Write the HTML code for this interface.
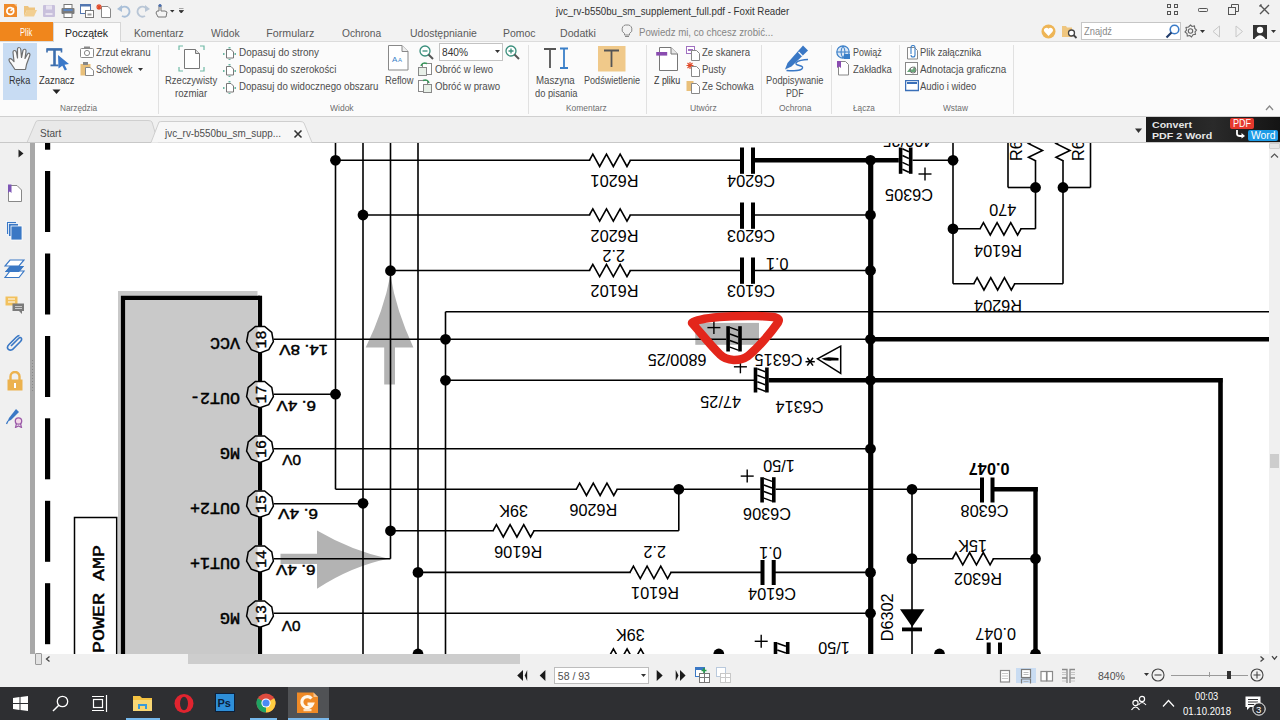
<!DOCTYPE html>
<html><head><meta charset="utf-8">
<style>
*{margin:0;padding:0;box-sizing:border-box}
html,body{width:1280px;height:720px;overflow:hidden;background:#f0f0f0;font-family:"Liberation Sans",sans-serif;color:#333}
.a{position:absolute;white-space:nowrap}
#title{left:0;top:0;width:1280px;height:22px;background:#f2f2f2}
#tabs{left:0;top:22px;width:1280px;height:20px;background:#f2f2f2}
#ribbon{left:0;top:41px;width:1280px;height:76px;background:#fbfbfb;border-top:1px solid #dcdcdc;border-bottom:1px solid #d0d0d0}
#doctabs{left:0;top:117px;width:1280px;height:26px;background:#f0f0f0;border-bottom:1px solid #c8c8c8}
#nav{left:0;top:143px;width:30px;height:521px;background:#f0f0f0}
#navbar{left:30px;top:143px;width:5px;height:521px;background:#a8a8a8}
#doc{left:35px;top:143px;width:1234px;height:511px;background:#fff}
#vscroll{left:1269px;top:143px;width:11px;height:521px;background:#f0f0f0}
#hscroll{left:30px;top:654px;width:1239px;height:10px;background:#f0f0f0}
#status{left:0;top:664px;width:1280px;height:23px;background:#f0f0f0}
#taskbar{left:0;top:687px;width:1280px;height:33px;background:#2e2f32}
.rt{font-size:11px;color:#444}
.gl{font-size:10px;color:#777}
.tab{font-size:11.5px;color:#555}
</style></head><body>
<div id="title" class="a"></div>
<div id="tabs" class="a"></div>
<div id="ribbon" class="a"></div>
<div id="doctabs" class="a"></div>
<div id="nav" class="a"></div>
<div id="navbar" class="a"></div>
<div id="doc" class="a"></div>
<div id="vscroll" class="a"></div>
<div id="hscroll" class="a"></div>
<div id="status" class="a"></div>
<div id="taskbar" class="a"></div>
<svg class="a" style="left:0;top:0" width="1280" height="720" viewBox="0 0 1280 720"><defs><clipPath id="dc"><rect x="35" y="143" width="1234" height="511"/></clipPath></defs><g clip-path="url(#dc)"><rect x="118" y="291" width="139.5" height="370" fill="#c9c9c9"/><path d="M390.4,275 Q384,310 365.7,347.5 L384.2,347.5 L384.2,384.5 L395,384.5 L395,347.5 L413.4,347.5 Q396,310 390.4,275 Z" fill="#b3b3b3"/><path d="M388.5,558.8 Q352,551 317,530.6 L317,553.8 L280.5,553.8 L280.5,564 L317,564 L317,588.8 Q352,566 388.5,558.8 Z" fill="#b3b3b3"/><rect x="695.3" y="322.9" width="63.7" height="21.9" fill="#b4b4b4"/><rect x="45" y="88.7" width="5.2" height="61"/><rect x="45" y="171" width="5.2" height="61"/><rect x="45" y="253.5" width="5.2" height="61"/><rect x="45" y="336" width="5.2" height="61"/><rect x="45" y="418.3" width="5.2" height="61"/><rect x="45" y="500.8" width="5.2" height="61"/><rect x="45" y="583.2" width="5.2" height="61"/><path d="M74.5,670 L74.5,517.5 L116.7,517.5 L116.7,670" fill="none" stroke="#000" stroke-width="1.5"/><text transform="translate(103.8,653) rotate(-90)" font-family="Liberation Mono" font-size="16" textLength="108" lengthAdjust="spacingAndGlyphs" stroke="#000" stroke-width="0.4">POWER AMP</text><path d="M123,670 L123,297.8 L260,297.8" fill="none" stroke="#000" stroke-width="4.2"/><path d="M260,295.7 L260,326.1" fill="none" stroke="#000" stroke-width="4.2"/><path d="M260,352.5 L260,381.0" fill="none" stroke="#000" stroke-width="4.2"/><path d="M260,407.4 L260,435.6" fill="none" stroke="#000" stroke-width="4.2"/><path d="M260,462.0 L260,490.5" fill="none" stroke="#000" stroke-width="4.2"/><path d="M260,516.9 L260,545.5" fill="none" stroke="#000" stroke-width="4.2"/><path d="M260,571.9000000000001 L260,600.5" fill="none" stroke="#000" stroke-width="4.2"/><path d="M260,626.9000000000001 L260,670" fill="none" stroke="#000" stroke-width="4.2"/><polygon points="273.39,341.66 268.74,349.72 260.00,352.90 251.26,349.72 246.61,341.66 248.22,332.50 255.35,326.52 264.65,326.52 271.78,332.50" fill="none" stroke="#000" stroke-width="1.5"/><text transform="translate(266.3,348.5) rotate(-90)" font-family="Liberation Mono" font-size="14" textLength="18" lengthAdjust="spacingAndGlyphs" stroke="#000" stroke-width="0.4">18</text><text transform="translate(239.9,338.1) rotate(180)" font-family="Liberation Mono" font-size="16" font-weight="normal" textLength="30" lengthAdjust="spacingAndGlyphs" stroke="#000" stroke-width="0.45">VCC</text><polygon points="273.39,396.56 268.74,404.62 260.00,407.80 251.26,404.62 246.61,396.56 248.22,387.40 255.35,381.42 264.65,381.42 271.78,387.40" fill="none" stroke="#000" stroke-width="1.5"/><text transform="translate(266.3,403.4) rotate(-90)" font-family="Liberation Mono" font-size="14" textLength="18" lengthAdjust="spacingAndGlyphs" stroke="#000" stroke-width="0.4">17</text><text transform="translate(239.9,393.0) rotate(180)" font-family="Liberation Mono" font-size="16" font-weight="normal" textLength="50" lengthAdjust="spacingAndGlyphs" stroke="#000" stroke-width="0.45">OUT2-</text><polygon points="273.39,451.16 268.74,459.22 260.00,462.40 251.26,459.22 246.61,451.16 248.22,442.00 255.35,436.02 264.65,436.02 271.78,442.00" fill="none" stroke="#000" stroke-width="1.5"/><text transform="translate(266.3,458.0) rotate(-90)" font-family="Liberation Mono" font-size="14" textLength="18" lengthAdjust="spacingAndGlyphs" stroke="#000" stroke-width="0.4">16</text><text transform="translate(239.9,447.6) rotate(180)" font-family="Liberation Mono" font-size="16" font-weight="normal" textLength="20" lengthAdjust="spacingAndGlyphs" stroke="#000" stroke-width="0.45">MG</text><polygon points="273.39,506.06 268.74,514.12 260.00,517.30 251.26,514.12 246.61,506.06 248.22,496.90 255.35,490.92 264.65,490.92 271.78,496.90" fill="none" stroke="#000" stroke-width="1.5"/><text transform="translate(266.3,512.9) rotate(-90)" font-family="Liberation Mono" font-size="14" textLength="18" lengthAdjust="spacingAndGlyphs" stroke="#000" stroke-width="0.4">15</text><text transform="translate(239.9,502.5) rotate(180)" font-family="Liberation Mono" font-size="16" font-weight="normal" textLength="50" lengthAdjust="spacingAndGlyphs" stroke="#000" stroke-width="0.45">OUT2+</text><polygon points="273.39,561.06 268.74,569.12 260.00,572.30 251.26,569.12 246.61,561.06 248.22,551.90 255.35,545.92 264.65,545.92 271.78,551.90" fill="none" stroke="#000" stroke-width="1.5"/><text transform="translate(266.3,567.9000000000001) rotate(-90)" font-family="Liberation Mono" font-size="14" textLength="18" lengthAdjust="spacingAndGlyphs" stroke="#000" stroke-width="0.4">14</text><text transform="translate(239.9,557.5) rotate(180)" font-family="Liberation Mono" font-size="16" font-weight="normal" textLength="50" lengthAdjust="spacingAndGlyphs" stroke="#000" stroke-width="0.45">OUT1+</text><polygon points="273.39,616.06 268.74,624.12 260.00,627.30 251.26,624.12 246.61,616.06 248.22,606.90 255.35,600.92 264.65,600.92 271.78,606.90" fill="none" stroke="#000" stroke-width="1.5"/><text transform="translate(266.3,622.9000000000001) rotate(-90)" font-family="Liberation Mono" font-size="14" textLength="18" lengthAdjust="spacingAndGlyphs" stroke="#000" stroke-width="0.4">13</text><text transform="translate(239.9,612.5) rotate(180)" font-family="Liberation Mono" font-size="16" font-weight="normal" textLength="20" lengthAdjust="spacingAndGlyphs" stroke="#000" stroke-width="0.45">MG</text><path d="M273.6,339.3 L726.3,339.3" fill="none" stroke="#000" stroke-width="1.6"/><path d="M273.6,394.2 L335.5,394.2" fill="none" stroke="#000" stroke-width="1.6"/><path d="M273.6,448.8 L870.5,448.8" fill="none" stroke="#000" stroke-width="1.6"/><path d="M273.6,503.7 L363,503.7" fill="none" stroke="#000" stroke-width="1.6"/><path d="M273.6,558.7 L390.5,558.7" fill="none" stroke="#000" stroke-width="1.6"/><path d="M273.6,613.3 L870.5,613.3" fill="none" stroke="#000" stroke-width="1.6"/><text transform="translate(328,345.2) rotate(180)" font-family="Liberation Sans" font-size="15" font-weight="normal" textLength="48.7" lengthAdjust="spacingAndGlyphs" stroke="#000" stroke-width="0.45">14. 8V</text><text transform="translate(316,400.6) rotate(180)" font-family="Liberation Sans" font-size="15" font-weight="normal" textLength="39.4" lengthAdjust="spacingAndGlyphs" stroke="#000" stroke-width="0.45">6. 4V</text><text transform="translate(301,455.2) rotate(180)" font-family="Liberation Sans" font-size="15" font-weight="normal" textLength="18.8" lengthAdjust="spacingAndGlyphs" stroke="#000" stroke-width="0.45">0V</text><text transform="translate(318,509) rotate(180)" font-family="Liberation Sans" font-size="15" font-weight="normal" textLength="40" lengthAdjust="spacingAndGlyphs" stroke="#000" stroke-width="0.45">6. 4V</text><text transform="translate(315.5,564.5) rotate(180)" font-family="Liberation Sans" font-size="15" font-weight="normal" textLength="39.4" lengthAdjust="spacingAndGlyphs" stroke="#000" stroke-width="0.45">6. 4V</text><text transform="translate(300.5,621.3) rotate(180)" font-family="Liberation Sans" font-size="15" font-weight="normal" textLength="18.8" lengthAdjust="spacingAndGlyphs" stroke="#000" stroke-width="0.45">0V</text><path d="M335.5,140 L335.5,489.3" fill="none" stroke="#000" stroke-width="1.6"/><path d="M335.5,489.3 L760.3,489.3" fill="none" stroke="#000" stroke-width="1.6"/><path d="M363,140 L363,660" fill="none" stroke="#000" stroke-width="1.6"/><path d="M390.5,140 L390.5,558.7" fill="none" stroke="#000" stroke-width="1.6"/><path d="M418,140 L418,660" fill="none" stroke="#000" stroke-width="1.6"/><path d="M445.5,311.7 L445.5,660" fill="none" stroke="#000" stroke-width="1.6"/><path d="M678.8,489.3 L678.8,530.8" fill="none" stroke="#000" stroke-width="1.6"/><path d="M390.5,530.8 L678.8,530.8" fill="none" stroke="#000" stroke-width="1.6"/><path d="M335.5,160.3 L742,160.3" fill="none" stroke="#000" stroke-width="1.6"/><path d="M363,215 L742,215" fill="none" stroke="#000" stroke-width="1.6"/><path d="M390.5,270.5 L742,270.5" fill="none" stroke="#000" stroke-width="1.6"/><path d="M753,160.3 L898.8,160.3" fill="none" stroke="#000" stroke-width="4.6"/><path d="M753,215 L870.5,215" fill="none" stroke="#000" stroke-width="1.6"/><path d="M753,270.5 L870.5,270.5" fill="none" stroke="#000" stroke-width="1.6"/><path d="M912.5,160.3 L953,160.3" fill="none" stroke="#000" stroke-width="1.6"/><path d="M870.7,160.3 L870.7,660" fill="none" stroke="#000" stroke-width="5.2"/><path d="M445.5,311.7 L1269,311.7" fill="none" stroke="#000" stroke-width="1.6"/><path d="M741,339.3 L870.5,339.3" fill="none" stroke="#000" stroke-width="1.6"/><path d="M870.5,339.3 L1269,339.3" fill="none" stroke="#000" stroke-width="4.6"/><path d="M445.5,380.3 L754,380.3" fill="none" stroke="#000" stroke-width="1.6"/><path d="M768.7,380.3 L1222.5,380.3" fill="none" stroke="#000" stroke-width="4.6"/><path d="M1220.5,378 L1220.5,660" fill="none" stroke="#000" stroke-width="4.6"/><path d="M418,572.4 L762.5,572.4" fill="none" stroke="#000" stroke-width="1.6"/><path d="M773.7,572.4 L870.5,572.4" fill="none" stroke="#000" stroke-width="1.6"/><path d="M775.6,489.3 L982,489.3" fill="none" stroke="#000" stroke-width="1.6"/><path d="M992.5,489.3 L1037.8,489.3" fill="none" stroke="#000" stroke-width="4.4"/><path d="M1035.5,487.1 L1035.5,660" fill="none" stroke="#000" stroke-width="4.4"/><path d="M912,489.3 L912,660" fill="none" stroke="#000" stroke-width="1.6"/><path d="M912,558.7 L1035.5,558.7" fill="none" stroke="#000" stroke-width="1.6"/><path d="M953,140 L953,283.8" fill="none" stroke="#000" stroke-width="1.6"/><path d="M953,228.8 L1035.5,228.8" fill="none" stroke="#000" stroke-width="1.6"/><path d="M953,283.8 L1063,283.8" fill="none" stroke="#000" stroke-width="1.6"/><path d="M1008,140 L1008,187.5" fill="none" stroke="#000" stroke-width="1.6"/><path d="M1008,187.5 L1035.5,187.5" fill="none" stroke="#000" stroke-width="1.6"/><path d="M1035.5,160 L1035.5,228.8" fill="none" stroke="#000" stroke-width="1.6"/><path d="M1090.5,140 L1090.5,187.5" fill="none" stroke="#000" stroke-width="1.6"/><path d="M1063,187.5 L1090.5,187.5" fill="none" stroke="#000" stroke-width="1.6"/><path d="M1063,160 L1063,283.8" fill="none" stroke="#000" stroke-width="1.6"/><path d="M1035.5,119.7 L1042.5,123.12 L1028.5,129.95 L1042.5,136.78 L1028.5,143.62 L1042.5,150.45 L1028.5,157.28 L1035.5,160.7" fill="none" stroke="#000" stroke-width="1.6"/><path d="M1063,119.7 L1070,123.12 L1056,129.95 L1070,136.78 L1056,143.62 L1070,150.45 L1056,157.28 L1063,160.7" fill="none" stroke="#000" stroke-width="1.6"/><rect x="590.1999999999999" y="158.8" width="39.4" height="3" fill="#fff"/><path d="M589.4,160.3 L592.82,154.1 L599.65,166.5 L606.48,154.1 L613.32,166.5 L620.15,154.1 L626.98,166.5 L630.4,160.3" fill="none" stroke="#000" stroke-width="1.6"/><rect x="590.1999999999999" y="213.5" width="39.4" height="3" fill="#fff"/><path d="M589.4,215 L592.82,208.8 L599.65,221.2 L606.48,208.8 L613.32,221.2 L620.15,208.8 L626.98,221.2 L630.4,215" fill="none" stroke="#000" stroke-width="1.6"/><rect x="590.1999999999999" y="269.0" width="39.4" height="3" fill="#fff"/><path d="M589.4,270.5 L592.82,264.3 L599.65,276.7 L606.48,264.3 L613.32,276.7 L620.15,264.3 L626.98,276.7 L630.4,270.5" fill="none" stroke="#000" stroke-width="1.6"/><rect x="980.8" y="227.3" width="39.4" height="3" fill="#fff"/><path d="M980,228.8 L983.42,222.6 L990.25,235.0 L997.08,222.6 L1003.92,235.0 L1010.75,222.6 L1017.58,235.0 L1021,228.8" fill="none" stroke="#000" stroke-width="1.6"/><rect x="974.5" y="282.3" width="39.4" height="3" fill="#fff"/><path d="M973.7,283.8 L977.12,277.6 L983.95,290.0 L990.78,277.6 L997.62,290.0 L1004.45,277.6 L1011.28,290.0 L1014.7,283.8" fill="none" stroke="#000" stroke-width="1.6"/><rect x="577.0" y="487.8" width="39.4" height="3" fill="#fff"/><path d="M576.2,489.3 L579.62,483.1 L586.45,495.5 L593.28,483.1 L600.12,495.5 L606.95,483.1 L613.78,495.5 L617.2,489.3" fill="none" stroke="#000" stroke-width="1.6"/><rect x="493.8" y="529.3" width="39.4" height="3" fill="#fff"/><path d="M493,530.8 L496.42,524.6 L503.25,537.0 L510.08,524.6 L516.92,537.0 L523.75,524.6 L530.58,537.0 L534,530.8" fill="none" stroke="#000" stroke-width="1.6"/><rect x="630.8" y="570.9" width="39.4" height="3" fill="#fff"/><path d="M630,572.4 L633.42,566.2 L640.25,578.6 L647.08,566.2 L653.92,578.6 L660.75,566.2 L667.58,578.6 L671,572.4" fill="none" stroke="#000" stroke-width="1.6"/><rect x="953.3" y="557.2" width="39.4" height="3" fill="#fff"/><path d="M952.5,558.7 L955.92,552.5 L962.75,564.9 L969.58,552.5 L976.42,564.9 L983.25,552.5 L990.08,564.9 L993.5,558.7" fill="none" stroke="#000" stroke-width="1.6"/><rect x="610.8" y="653.5" width="39.4" height="3" fill="#fff"/><path d="M610,655 L613.42,648.8 L620.25,661.2 L627.08,648.8 L633.92,661.2 L640.75,648.8 L647.58,661.2 L651,655" fill="none" stroke="#000" stroke-width="1.6"/><rect x="740.0" y="147.5" width="4" height="26.30000000000001"/><rect x="751.0" y="147.5" width="4" height="26.30000000000001"/><rect x="740.0" y="202.5" width="4" height="26.30000000000001"/><rect x="751.0" y="202.5" width="4" height="26.30000000000001"/><rect x="740.0" y="257.5" width="4" height="26.30000000000001"/><rect x="751.0" y="257.5" width="4" height="26.30000000000001"/><rect x="760.5" y="560" width="4" height="25"/><rect x="771.7" y="560" width="4" height="25"/><rect x="980.0" y="477.5" width="4" height="25.0"/><rect x="990.5" y="477.5" width="4" height="25.0"/><rect x="986.7" y="642.5" width="4" height="25.5"/><rect x="998.0" y="642.5" width="4" height="25.5"/><rect x="898.8" y="147.5" width="3.6" height="26.30000000000001"/><rect x="908.9" y="147.5" width="3.6" height="26.30000000000001"/><path d="M902.4,148.7 L908.9,151.7" fill="none" stroke="#000" stroke-width="1.5"/><path d="M902.4,155.54 L908.9,158.54" fill="none" stroke="#000" stroke-width="1.5"/><path d="M902.4,162.38 L908.9,165.38" fill="none" stroke="#000" stroke-width="1.5"/><path d="M902.4,169.21 L908.9,172.21" fill="none" stroke="#000" stroke-width="1.5"/><rect x="726.3" y="326.2" width="3.6" height="25.30000000000001"/><rect x="738.1999999999999" y="326.2" width="3.6" height="25.30000000000001"/><path d="M729.9,327.4 L738.1999999999999,330.4" fill="none" stroke="#000" stroke-width="1.5"/><path d="M729.9,333.98 L738.1999999999999,336.98" fill="none" stroke="#000" stroke-width="1.5"/><path d="M729.9,340.56 L738.1999999999999,343.56" fill="none" stroke="#000" stroke-width="1.5"/><path d="M729.9,347.13 L738.1999999999999,350.13" fill="none" stroke="#000" stroke-width="1.5"/><rect x="753.7" y="367.5" width="3.6" height="25.0"/><rect x="765.1" y="367.5" width="3.6" height="25.0"/><path d="M757.3000000000001,368.7 L765.1,371.7" fill="none" stroke="#000" stroke-width="1.5"/><path d="M757.3000000000001,375.2 L765.1,378.2" fill="none" stroke="#000" stroke-width="1.5"/><path d="M757.3000000000001,381.7 L765.1,384.7" fill="none" stroke="#000" stroke-width="1.5"/><path d="M757.3000000000001,388.2 L765.1,391.2" fill="none" stroke="#000" stroke-width="1.5"/><rect x="760.3" y="477.2" width="3.6" height="25.30000000000001"/><rect x="772.0" y="477.2" width="3.6" height="25.30000000000001"/><path d="M763.9,478.4 L772.0,481.4" fill="none" stroke="#000" stroke-width="1.5"/><path d="M763.9,484.98 L772.0,487.98" fill="none" stroke="#000" stroke-width="1.5"/><path d="M763.9,491.56 L772.0,494.56" fill="none" stroke="#000" stroke-width="1.5"/><path d="M763.9,498.13 L772.0,501.13" fill="none" stroke="#000" stroke-width="1.5"/><rect x="773.7" y="642" width="3.6" height="26"/><rect x="785.9" y="642" width="3.6" height="26"/><path d="M777.3000000000001,643.2 L785.9,646.2" fill="none" stroke="#000" stroke-width="1.5"/><path d="M777.3000000000001,649.96 L785.9,652.96" fill="none" stroke="#000" stroke-width="1.5"/><path d="M777.3000000000001,656.72 L785.9,659.72" fill="none" stroke="#000" stroke-width="1.5"/><path d="M777.3000000000001,663.48 L785.9,666.48" fill="none" stroke="#000" stroke-width="1.5"/><path d="M918.5,174 L931.5,174" fill="none" stroke="#000" stroke-width="1.4"/><path d="M925,167.5 L925,180.5" fill="none" stroke="#000" stroke-width="1.4"/><path d="M707.4,327.6 L720.4,327.6" fill="none" stroke="#000" stroke-width="1.4"/><path d="M713.9,321.1 L713.9,334.1" fill="none" stroke="#000" stroke-width="1.4"/><path d="M733.9,366.8 L746.9,366.8" fill="none" stroke="#000" stroke-width="1.4"/><path d="M740.4,360.3 L740.4,373.3" fill="none" stroke="#000" stroke-width="1.4"/><path d="M740.7,476.1 L753.7,476.1" fill="none" stroke="#000" stroke-width="1.4"/><path d="M747.2,469.6 L747.2,482.6" fill="none" stroke="#000" stroke-width="1.4"/><path d="M754.7,641.3 L767.7,641.3" fill="none" stroke="#000" stroke-width="1.4"/><path d="M761.2,634.8 L761.2,647.8" fill="none" stroke="#000" stroke-width="1.4"/><path d="M900,609.3 L924.5,609.3 L912.2,627 Z"/><rect x="902" y="627.5" width="20" height="3.8"/><path d="M840.7,346.2 L817.5,358.8 L840.7,373.4 Z" fill="none" stroke="#000" stroke-width="1.5"/><path d="M821.5,358.8 Q826,356.5 832,357.5 L838.5,358 L838.5,360.5 L832,360.5 Q826,361.5 821.5,358.8 Z"/><path d="M805.5,361.7 L814.8,361.7" fill="none" stroke="#000" stroke-width="1.5"/><path d="M807.3,357.8 L813,365.6" fill="none" stroke="#000" stroke-width="1.5"/><path d="M813,357.8 L807.3,365.6" fill="none" stroke="#000" stroke-width="1.5"/><circle cx="335.5" cy="160.3" r="5.4"/><circle cx="363" cy="215" r="5.4"/><circle cx="390.5" cy="270.7" r="5.4"/><circle cx="870.5" cy="160.3" r="5.4"/><circle cx="870.5" cy="215" r="5.4"/><circle cx="870.5" cy="270.5" r="5.4"/><circle cx="953" cy="160.3" r="5.4"/><circle cx="953" cy="228.8" r="5.4"/><circle cx="1035.5" cy="187.5" r="5.4"/><circle cx="1063" cy="187.5" r="5.4"/><circle cx="445.5" cy="339.3" r="5.4"/><circle cx="445.5" cy="380.3" r="5.4"/><circle cx="870.5" cy="339.3" r="5.4"/><circle cx="870.5" cy="380.3" r="5.4"/><circle cx="870.5" cy="448.8" r="5.4"/><circle cx="335.5" cy="394.2" r="5.4"/><circle cx="678.8" cy="489.3" r="5.4"/><circle cx="912" cy="489.3" r="5.4"/><circle cx="912" cy="558.7" r="5.4"/><circle cx="1035.5" cy="558.7" r="5.4"/><circle cx="363" cy="503.3" r="5.4"/><circle cx="390.5" cy="530.8" r="5.4"/><circle cx="418" cy="572.4" r="5.4"/><circle cx="870.5" cy="572.4" r="5.4"/><circle cx="870.5" cy="613.3" r="5.4"/><circle cx="418" cy="654" r="5.4"/><circle cx="718.8" cy="654" r="5.4"/><circle cx="939.5" cy="654" r="5.4"/><circle cx="1035.5" cy="654" r="5.4"/><text transform="translate(638.5,175) rotate(180)" font-family="Liberation Sans" font-size="16.3" font-weight="normal" >R6201</text><text transform="translate(638.5,230) rotate(180)" font-family="Liberation Sans" font-size="16.3" font-weight="normal" >R6202</text><text transform="translate(638.5,285) rotate(180)" font-family="Liberation Sans" font-size="16.3" font-weight="normal" >R6102</text><text transform="translate(775,175) rotate(180)" font-family="Liberation Sans" font-size="16.3" font-weight="normal" >C6204</text><text transform="translate(775,230) rotate(180)" font-family="Liberation Sans" font-size="16.3" font-weight="normal" >C6203</text><text transform="translate(775,285) rotate(180)" font-family="Liberation Sans" font-size="16.3" font-weight="normal" >C6103</text><text transform="translate(933,188.8) rotate(180)" font-family="Liberation Sans" font-size="16.3" font-weight="normal" >C6305</text><text transform="translate(1022,245) rotate(180)" font-family="Liberation Sans" font-size="16.3" font-weight="normal" >R6104</text><text transform="translate(1022,299.5) rotate(180)" font-family="Liberation Sans" font-size="16.3" font-weight="normal" >R6204</text><text transform="translate(802.5,353.5) rotate(180)" font-family="Liberation Sans" font-size="16.3" font-weight="normal" >C6315</text><text transform="translate(706.5,353.8) rotate(180)" font-family="Liberation Sans" font-size="16.3" font-weight="normal" >6800/25</text><text transform="translate(741,396.3) rotate(180)" font-family="Liberation Sans" font-size="16.3" font-weight="normal" >47/25</text><text transform="translate(823.5,401.3) rotate(180)" font-family="Liberation Sans" font-size="16.3" font-weight="normal" >C6314</text><text transform="translate(617.3,503.8) rotate(180)" font-family="Liberation Sans" font-size="16.3" font-weight="normal" >R6206</text><text transform="translate(542.2,546.3) rotate(180)" font-family="Liberation Sans" font-size="16.3" font-weight="normal" >R6106</text><text transform="translate(791,507.5) rotate(180)" font-family="Liberation Sans" font-size="16.3" font-weight="normal" >C6306</text><text transform="translate(1008.5,505) rotate(180)" font-family="Liberation Sans" font-size="16.3" font-weight="normal" >C6308</text><text transform="translate(1002,572.5) rotate(180)" font-family="Liberation Sans" font-size="16.3" font-weight="normal" >R6302</text><text transform="translate(679,587) rotate(180)" font-family="Liberation Sans" font-size="16.3" font-weight="normal" >R6101</text><text transform="translate(796,587.5) rotate(180)" font-family="Liberation Sans" font-size="16.3" font-weight="normal" >C6104</text><text transform="translate(528,505) rotate(180)" font-family="Liberation Sans" font-size="16.3" font-weight="normal" >39K</text><text transform="translate(625,250) rotate(180)" font-family="Liberation Sans" font-size="16.3" font-weight="normal" >2.2</text><text transform="translate(1016.3,203.8) rotate(180)" font-family="Liberation Sans" font-size="16.3" font-weight="normal" >470</text><text transform="translate(788.5,257.5) rotate(180)" font-family="Liberation Sans" font-size="16.3" font-weight="normal" >0.1</text><text transform="translate(794.8,460) rotate(180)" font-family="Liberation Sans" font-size="16.3" font-weight="normal" >1/50</text><text transform="translate(781.8,547) rotate(180)" font-family="Liberation Sans" font-size="16.3" font-weight="normal" >0.1</text><text transform="translate(987,539.5) rotate(180)" font-family="Liberation Sans" font-size="16.3" font-weight="normal" >15K</text><text transform="translate(666,545.6) rotate(180)" font-family="Liberation Sans" font-size="16.3" font-weight="normal" >2.2</text><text transform="translate(644.8,628.8) rotate(180)" font-family="Liberation Sans" font-size="16.3" font-weight="normal" >39K</text><text transform="translate(1016,628) rotate(180)" font-family="Liberation Sans" font-size="16.3" font-weight="normal" >0.047</text><text transform="translate(849.8,642) rotate(180)" font-family="Liberation Sans" font-size="16.3" font-weight="normal" >1/50</text><text transform="translate(932.3,135) rotate(180)" font-family="Liberation Sans" font-size="16.3" font-weight="normal" >400/25</text><text transform="translate(1009.5,462.5) rotate(180)" font-family="Liberation Sans" font-size="16.3" font-weight="bold" >0.047</text><text transform="translate(892.5,641.3) rotate(-90)" font-family="Liberation Sans" font-size="16.3" >D6302</text><text transform="translate(1022.3,161) rotate(-90)" font-family="Liberation Sans" font-size="16.3" >R6205</text><text transform="translate(1084.2,161) rotate(-90)" font-family="Liberation Sans" font-size="16.3" >R6206</text><path d="M692,323 C700,317 735,315.5 757,316 C770,316.5 782,316 778,322.5 C770,334 757,349 748,356 C740,361.5 727,361.5 720,354.5 C710,345 701,333 692,323 Z" fill="none" stroke="#e3261b" stroke-width="8.5" stroke-linejoin="round"/></g></svg>
<svg class="a" style="left:4px;top:4px" width="14" height="14" viewBox="0 0 14 14"><rect x="0" y="0" width="13" height="13" fill="#ef8b2c"/><path d="M13,0 L10,0 L13,3Z" fill="#f7c793"/><circle cx="6.3" cy="7" r="3.4" fill="none" stroke="#fff" stroke-width="1.8"/><path d="M6.5,6.8 L10,4" stroke="#fff" stroke-width="1.5"/></svg>
<svg class="a" style="left:24px;top:5px" width="13" height="12" viewBox="0 0 13 12"><path d="M0,1 L4,1 L5,2.5 L11,2.5 L11,5 L3,5 L0,11Z" fill="#eec47e"/><path d="M3,5 L13,5 L10,11.5 L0,11.5Z" fill="#f2cf92"/></svg>
<svg class="a" style="left:43px;top:5px" width="12" height="12" viewBox="0 0 12 12"><rect x="0" y="0" width="12" height="12" rx="1" fill="#c8c0dc"/><rect x="3" y="0.5" width="6" height="4" fill="#e8e3f0"/><rect x="2.5" y="8" width="7" height="2" fill="#e8e3f0"/></svg>
<svg class="a" style="left:61px;top:4px" width="14" height="14" viewBox="0 0 14 14"><rect x="3" y="0.5" width="8" height="4" fill="#fff" stroke="#777" stroke-width="1"/><rect x="0.5" y="4" width="13" height="6" rx="1" fill="#7b7b7b"/><rect x="2.5" y="5" width="9" height="2" fill="#5b86c2"/><rect x="3" y="9" width="8" height="4.5" fill="#fff" stroke="#777" stroke-width="1"/></svg>
<svg class="a" style="left:80px;top:4px" width="14" height="14" viewBox="0 0 14 14"><rect x="0.5" y="0.5" width="10" height="9" fill="#fff" stroke="#5276b0" stroke-width="1"/><rect x="0.5" y="0.5" width="10" height="2" fill="#5276b0"/><rect x="5.5" y="6.5" width="8" height="7" fill="#fff" stroke="#777" stroke-width="1"/><rect x="7.5" y="9.5" width="4" height="2" fill="#999"/></svg>
<svg class="a" style="left:96px;top:4px" width="15" height="14" viewBox="0 0 15 14"><path d="M5.5,2.5 L12,2.5 L14.5,5 L14.5,13.5 L5.5,13.5Z" fill="#fff" stroke="#888" stroke-width="1"/><path d="M3,0 L3,6 M0,3 L6,3 M1,1 L5,5 M5,1 L1,5" stroke="#e04a2a" stroke-width="1.2"/></svg>
<svg class="a" style="left:117px;top:4px" width="14" height="14" viewBox="0 0 14 14"><path d="M4,4 A5,5 0 1 1 5,12" fill="none" stroke="#a9bfd8" stroke-width="2"/><path d="M0,5 L5,1 L5,8Z" fill="#a9bfd8"/></svg>
<svg class="a" style="left:136px;top:4px" width="14" height="14" viewBox="0 0 14 14"><path d="M10,4 A5,5 0 1 0 9,12" fill="none" stroke="#b9c6d6" stroke-width="2"/><path d="M14,5 L9,1 L9,8Z" fill="#b9c6d6"/></svg>
<svg class="a" style="left:155px;top:4px" width="14" height="14" viewBox="0 0 14 14"><path d="M4,1 L4,7 L2,7 L1,9 L3,13 L11,13 L12,8 L10,7 L6,7 L6,1Z" fill="#f4f4f4" stroke="#777" stroke-width="1"/><circle cx="5" cy="1.5" r="1.5" fill="#4a6fb0"/></svg>
<svg class="a" style="left:170px;top:10px" width="5" height="3" viewBox="0 0 5 3"><path d="M0,0 L4.5,0 L2.25,2.5Z" fill="#333"/></svg>
<svg class="a" style="left:179px;top:8px" width="5" height="6" viewBox="0 0 5 6"><path d="M0,0 L4.5,0 M0,2.5 L4.5,2.5 L2.25,5Z" stroke="#333" fill="#333" stroke-width="0.8"/></svg>
<div class="a" style="left:556.24px;top:6.29px;font-size:10.5px;line-height:10.5px;color:#333;font-weight:normal;font-family:'Liberation Sans';transform:scaleX(0.925);transform-origin:0 0;">jvc_rv-b550bu_sm_supplement_full.pdf - Foxit Reader</div>
<svg class="a" style="left:1166px;top:3px" width="13" height="13" viewBox="0 0 13 13"><g fill="none" stroke="#555" stroke-width="1"><rect x="1.5" y="1.5" width="3" height="3"/><rect x="8.5" y="1.5" width="3" height="3"/><rect x="1.5" y="8.5" width="3" height="3"/><rect x="8.5" y="8.5" width="3" height="3"/></g></svg>
<svg class="a" style="left:1198px;top:7px" width="11" height="6" viewBox="0 0 11 6"><rect x="0.5" y="1.5" width="9" height="3" rx="0.8" fill="none" stroke="#555" stroke-width="1"/></svg>
<svg class="a" style="left:1228px;top:4px" width="12" height="12" viewBox="0 0 12 12"><g fill="none" stroke="#555" stroke-width="1"><rect x="0.5" y="3.5" width="7" height="7"/><path d="M3.5,3.5 L3.5,0.5 L10.5,0.5 L10.5,7.5 L7.5,7.5"/></g></svg>
<svg class="a" style="left:1259px;top:4px" width="12" height="12" viewBox="0 0 12 12"><path d="M1,1 L10,10 M10,1 L1,10" stroke="#555" stroke-width="1.4"/><path d="M1,1 L3,1 M1,1 L1,3" stroke="#555"/></svg>
<div class="a" style="left:0px;top:22px;width:53px;height:19px;background:#f0861c;"></div>
<div class="a" style="left:20.00px;top:27.23px;font-size:10.7px;line-height:10.7px;color:#fff;font-weight:normal;font-family:'Liberation Sans';transform:scaleX(0.706);transform-origin:0 0;">Plik</div>
<div class="a" style="left:53px;top:22px;width:68px;height:20px;background:#fbfbfb;border:1px solid #d6d6d6;border-bottom:none"></div>
<div class="a" style="left:64.80px;top:27.53px;font-size:10.7px;line-height:10.7px;color:#222;font-weight:normal;font-family:'Liberation Sans';transform:scaleX(0.980);transform-origin:0 0;">Początek</div>
<div class="a" style="left:134.20px;top:27.53px;font-size:10.7px;line-height:10.7px;color:#5a5a5a;font-weight:normal;font-family:'Liberation Sans';transform:scaleX(0.963);transform-origin:0 0;">Komentarz</div>
<div class="a" style="left:210.75px;top:27.53px;font-size:10.7px;line-height:10.7px;color:#5a5a5a;font-weight:normal;font-family:'Liberation Sans';transform:scaleX(0.965);transform-origin:0 0;">Widok</div>
<div class="a" style="left:266.25px;top:27.53px;font-size:10.7px;line-height:10.7px;color:#5a5a5a;font-weight:normal;font-family:'Liberation Sans';">Formularz</div>
<div class="a" style="left:342.00px;top:27.53px;font-size:10.7px;line-height:10.7px;color:#5a5a5a;font-weight:normal;font-family:'Liberation Sans';transform:scaleX(0.955);transform-origin:0 0;">Ochrona</div>
<div class="a" style="left:410.00px;top:27.53px;font-size:10.7px;line-height:10.7px;color:#5a5a5a;font-weight:normal;font-family:'Liberation Sans';transform:scaleX(0.979);transform-origin:0 0;">Udostępnianie</div>
<div class="a" style="left:502.50px;top:27.53px;font-size:10.7px;line-height:10.7px;color:#5a5a5a;font-weight:normal;font-family:'Liberation Sans';transform:scaleX(0.977);transform-origin:0 0;">Pomoc</div>
<div class="a" style="left:559.50px;top:27.53px;font-size:10.7px;line-height:10.7px;color:#5a5a5a;font-weight:normal;font-family:'Liberation Sans';transform:scaleX(0.992);transform-origin:0 0;">Dodatki</div>
<svg class="a" style="left:621px;top:24px" width="12" height="14" viewBox="0 0 12 14"><path d="M6,1 A4.5,4.5 0 0 1 8.5,9.5 L8.5,11 L3.5,11 L3.5,9.5 A4.5,4.5 0 0 1 6,1Z" fill="none" stroke="#888" stroke-width="1"/><path d="M4,12.5 L8,12.5" stroke="#888"/></svg>
<div class="a" style="left:638.70px;top:26.83px;font-size:10.7px;line-height:10.7px;color:#858585;font-weight:normal;font-family:'Liberation Sans';transform:scaleX(0.903);transform-origin:0 0;">Powiedz mi, co chcesz zrobić...</div>
<svg class="a" style="left:1041px;top:24px" width="16" height="16" viewBox="0 0 16 16"><circle cx="7.5" cy="7.5" r="7" fill="#eeb556"/><path d="M7.5,12 L3.5,7.8 A2.3,2.3 0 0 1 7.5,4.8 A2.3,2.3 0 0 1 11.5,7.8Z" fill="#fff"/></svg>
<svg class="a" style="left:1062px;top:24px" width="16" height="16" viewBox="0 0 16 16"><path d="M0,2 L4,2 L5,3.5 L10,3.5 L10,13 L0,13Z" fill="#efc67f"/><circle cx="9.5" cy="9" r="3" fill="#fff" stroke="#444" stroke-width="1.3"/><path d="M11.5,11 L14.5,14" stroke="#444" stroke-width="1.8"/></svg>
<div class="a" style="left:1081px;top:22px;width:100px;height:18px;background:#fff;border:1px solid #c6c6c6"></div>
<div class="a" style="left:1084.00px;top:25.99px;font-size:10.5px;line-height:10.5px;color:#8a8a8a;font-weight:normal;font-family:'Liberation Sans';transform:scaleX(0.889);transform-origin:0 0;">Znajdź</div>
<svg class="a" style="left:1165px;top:24px" width="16" height="15" viewBox="0 0 16 15"><circle cx="9.5" cy="5.5" r="4.3" fill="none" stroke="#3a7bc8" stroke-width="1.6"/><path d="M6.5,8.5 L1.5,13.5" stroke="#223c6b" stroke-width="2.2"/></svg>
<svg class="a" style="left:1184px;top:24px" width="15" height="15" viewBox="0 0 15 15"><g fill="none" stroke="#666" stroke-width="1.1"><circle cx="6.5" cy="7" r="2.2"/><path d="M6.5,1 L8,2.5 L10.5,2 L10.8,4.5 L12.5,6 L11,7.8 L11.5,10.3 L9,10.8 L7.5,13 L5.8,11.5 L3.3,12 L3,9.5 L1,8 L2.5,6 L2,3.5 L4.5,3 Z"/></g></svg>
<svg class="a" style="left:1200px;top:30px" width="6" height="4" viewBox="0 0 6 4"><path d="M0,0 L5,0 L2.5,3Z" fill="#333"/></svg>
<svg class="a" style="left:1212px;top:25px" width="9" height="13" viewBox="0 0 9 13"><path d="M7.5,1 L1,6.5 L7.5,12Z" fill="none" stroke="#c8c8c8" stroke-width="1"/></svg>
<svg class="a" style="left:1235px;top:25px" width="9" height="13" viewBox="0 0 9 13"><path d="M1,1 L7.5,6.5 L1,12Z" fill="none" stroke="#c8c8c8" stroke-width="1"/></svg>
<svg class="a" style="left:1253px;top:25px" width="14" height="14" viewBox="0 0 14 14"><rect x="0" y="0" width="14" height="14" fill="#333"/><circle cx="7" cy="5" r="3.2" fill="#fff"/><path d="M1.5,14 Q7,6.5 12.5,14Z" fill="#fff"/></svg>
<svg class="a" style="left:1271px;top:30px" width="6" height="4" viewBox="0 0 6 4"><path d="M0,0 L5,0 L2.5,3Z" fill="#333"/></svg>
<div class="a" style="left:158.3px;top:44.5px;width:1px;height:69px;background:#e1e1e1;"></div>
<div class="a" style="left:527.5px;top:44.5px;width:1px;height:69px;background:#e1e1e1;"></div>
<div class="a" style="left:646.3px;top:44.5px;width:1px;height:69px;background:#e1e1e1;"></div>
<div class="a" style="left:761.3px;top:44.5px;width:1px;height:69px;background:#e1e1e1;"></div>
<div class="a" style="left:830.5px;top:44.5px;width:1px;height:69px;background:#e1e1e1;"></div>
<div class="a" style="left:898.8px;top:44.5px;width:1px;height:69px;background:#e1e1e1;"></div>
<div class="a" style="left:1013.3px;top:44.5px;width:1px;height:69px;background:#e1e1e1;"></div>
<div class="a" style="left:59.70px;top:103.09px;font-size:9.4px;line-height:9.4px;color:#6e6e6e;font-weight:normal;font-family:'Liberation Sans';transform:scaleX(0.878);transform-origin:0 0;">Narzędzia</div>
<div class="a" style="left:330.00px;top:103.09px;font-size:9.4px;line-height:9.4px;color:#6e6e6e;font-weight:normal;font-family:'Liberation Sans';transform:scaleX(0.907);transform-origin:0 0;">Widok</div>
<div class="a" style="left:566.25px;top:103.09px;font-size:9.4px;line-height:9.4px;color:#6e6e6e;font-weight:normal;font-family:'Liberation Sans';transform:scaleX(0.897);transform-origin:0 0;">Komentarz</div>
<div class="a" style="left:689.50px;top:103.09px;font-size:9.4px;line-height:9.4px;color:#6e6e6e;font-weight:normal;font-family:'Liberation Sans';transform:scaleX(0.915);transform-origin:0 0;">Utwórz</div>
<div class="a" style="left:778.75px;top:103.09px;font-size:9.4px;line-height:9.4px;color:#6e6e6e;font-weight:normal;font-family:'Liberation Sans';transform:scaleX(0.900);transform-origin:0 0;">Ochrona</div>
<div class="a" style="left:853.00px;top:103.09px;font-size:9.4px;line-height:9.4px;color:#6e6e6e;font-weight:normal;font-family:'Liberation Sans';transform:scaleX(0.877);transform-origin:0 0;">Łącza</div>
<div class="a" style="left:942.50px;top:103.09px;font-size:9.4px;line-height:9.4px;color:#6e6e6e;font-weight:normal;font-family:'Liberation Sans';transform:scaleX(0.885);transform-origin:0 0;">Wstaw</div>
<div class="a" style="left:3.3px;top:43.2px;width:33.5px;height:56.5px;background:#c8dcf3;"></div>
<svg class="a" style="left:7px;top:46px" width="25" height="25" viewBox="0 0 25 25"><path d="M8,23.5 L4,17.5 Q1,14 2.5,12.8 Q4,12 6,14.5 L7,15.5 L6,6.5 Q6,4.5 7.5,4.5 Q9,4.5 9.5,6.5 L10.5,12 L10.5,3.5 Q10.5,1.5 12,1.5 Q13.5,1.5 13.8,3.5 L14.5,11.5 L16,4.5 Q16.5,3 18,3.3 Q19.3,3.7 19,5.5 L18,12.5 L20.5,8 Q21.5,6.7 22.5,7.5 Q23.3,8.3 22.8,9.5 L19.5,18.5 L18.5,23.5 Z" fill="#fbfbfb" stroke="#707070" stroke-width="1.2" stroke-linejoin="round"/></svg>
<div class="a" style="left:8.75px;top:75.55px;font-size:10px;line-height:10px;color:#333;font-weight:normal;font-family:'Liberation Sans';transform:scaleX(0.908);transform-origin:0 0;">Ręka</div>
<svg class="a" style="left:45px;top:47px" width="26" height="25" viewBox="0 0 26 25"><path d="M2,5.5 L2,2 L16.5,2 L16.5,5.5" fill="none" stroke="#3d6fae" stroke-width="1.6"/><rect x="2" y="1.5" width="14.5" height="2.2" fill="#3d6fae"/><rect x="8.2" y="2" width="2.6" height="16.5" fill="#3d6fae"/><rect x="5.5" y="17.5" width="8" height="1.8" fill="#3d6fae"/><path d="M13,8 L24,17 L19.5,17.8 L22,22.5 L19.8,23.5 L17.3,18.8 L13.5,21.5Z" fill="#3a78c9"/></svg>
<div class="a" style="left:38.75px;top:75.55px;font-size:10px;line-height:10px;color:#333;font-weight:normal;font-family:'Liberation Sans';transform:scaleX(0.939);transform-origin:0 0;">Zaznacz</div>
<svg class="a" style="left:52px;top:89px" width="10" height="6" viewBox="0 0 10 6"><path d="M0.5,0.5 L8.5,0.5 L4.5,5Z" fill="#222"/></svg>
<svg class="a" style="left:80px;top:46px" width="15" height="13" viewBox="0 0 15 13"><rect x="0.5" y="2.5" width="13" height="9" rx="1" fill="#fff" stroke="#888" stroke-width="1"/><rect x="4" y="0.5" width="6" height="2" fill="#888"/><circle cx="7" cy="7" r="2.6" fill="none" stroke="#888" stroke-width="1"/></svg>
<div class="a" style="left:96.30px;top:47.60px;font-size:10px;line-height:10px;color:#4d4d4d;font-weight:normal;font-family:'Liberation Sans';transform:scaleX(0.972);transform-origin:0 0;">Zrzut ekranu</div>
<svg class="a" style="left:80px;top:61px" width="15" height="15" viewBox="0 0 15 15"><rect x="0.5" y="3" width="10" height="11.5" fill="#e9c07a"/><rect x="3" y="1" width="5" height="3" fill="#888"/><path d="M5.5,6.5 L10,6.5 L13.5,9.5 L13.5,14.5 L5.5,14.5Z" fill="#fff" stroke="#888" stroke-width="1"/></svg>
<div class="a" style="left:96.30px;top:64.80px;font-size:10px;line-height:10px;color:#4d4d4d;font-weight:normal;font-family:'Liberation Sans';transform:scaleX(0.900);transform-origin:0 0;">Schowek</div>
<svg class="a" style="left:138px;top:68px" width="6" height="4" viewBox="0 0 6 4"><path d="M0,0 L5,0 L2.5,3Z" fill="#333"/></svg>
<svg class="a" style="left:178px;top:45px" width="27" height="28" viewBox="0 0 27 28"><g stroke="#6fb9a6" stroke-width="1.2" fill="none"><path d="M1,5 L1,1 L5,1 M22,1 L26,1 L26,5 M26,22 L26,26 L22,26 M5,26 L1,26 L1,22"/></g><path d="M6.5,4.5 L17.5,4.5 L21.5,8.5 L21.5,23.5 L6.5,23.5Z" fill="#fff" stroke="#777" stroke-width="1"/><path d="M17.5,4.5 L17.5,8.5 L21.5,8.5" fill="#ddd" stroke="#777" stroke-width="1"/></svg>
<div class="a" style="left:164.70px;top:75.55px;font-size:10px;line-height:10px;color:#4d4d4d;font-weight:normal;font-family:'Liberation Sans';transform:scaleX(0.949);transform-origin:0 0;">Rzeczywisty</div>
<div class="a" style="left:174.70px;top:89.00px;font-size:10px;line-height:10px;color:#4d4d4d;font-weight:normal;font-family:'Liberation Sans';transform:scaleX(0.966);transform-origin:0 0;">rozmiar</div>
<svg class="a" style="left:223px;top:46.5px" width="13" height="13" viewBox="0 0 13 13"><path d="M3.5,2.5 L8,2.5 L10.5,5 L10.5,11 L3.5,11Z" fill="#fff" stroke="#777" stroke-width="1"/><g fill="#6cb8a4"><rect x="5.5" y="0" width="2" height="1.5"/><rect x="0" y="6" width="1.5" height="2"/><rect x="11.5" y="6" width="1.5" height="2"/><rect x="5.5" y="12" width="2" height="1.5"/></g></svg>
<svg class="a" style="left:223px;top:63.5px" width="13" height="13" viewBox="0 0 13 13"><path d="M3.5,2.5 L8,2.5 L10.5,5 L10.5,11 L3.5,11Z" fill="#fff" stroke="#777" stroke-width="1"/><g fill="#6cb8a4"><rect x="5.5" y="0" width="2" height="1.5"/><rect x="0" y="6" width="1.5" height="2"/><rect x="11.5" y="6" width="1.5" height="2"/><rect x="5.5" y="12" width="2" height="1.5"/></g></svg>
<svg class="a" style="left:223px;top:80.5px" width="13" height="13" viewBox="0 0 13 13"><path d="M3.5,2.5 L8,2.5 L10.5,5 L10.5,11 L3.5,11Z" fill="#fff" stroke="#777" stroke-width="1"/><g fill="#6cb8a4"><rect x="5.5" y="0" width="2" height="1.5"/><rect x="0" y="6" width="1.5" height="2"/><rect x="11.5" y="6" width="1.5" height="2"/><rect x="5.5" y="12" width="2" height="1.5"/></g></svg>
<div class="a" style="left:238.75px;top:47.70px;font-size:10px;line-height:10px;color:#4d4d4d;font-weight:normal;font-family:'Liberation Sans';transform:scaleX(0.993);transform-origin:0 0;">Dopasuj do strony</div>
<div class="a" style="left:238.75px;top:64.80px;font-size:10px;line-height:10px;color:#4d4d4d;font-weight:normal;font-family:'Liberation Sans';transform:scaleX(0.967);transform-origin:0 0;">Dopasuj do szerokości</div>
<div class="a" style="left:238.75px;top:81.80px;font-size:10px;line-height:10px;color:#4d4d4d;font-weight:normal;font-family:'Liberation Sans';transform:scaleX(0.964);transform-origin:0 0;">Dopasuj do widocznego obszaru</div>
<svg class="a" style="left:388px;top:45px" width="21" height="26" viewBox="0 0 21 26"><path d="M0.5,0.5 L14,0.5 L20,6.5 L20,25 L0.5,25Z" fill="#fff" stroke="#888" stroke-width="1"/><path d="M14,0.5 L14,6.5 L20,6.5" fill="#eee" stroke="#888"/><text x="4" y="17" font-size="8" fill="#3a7fc8" font-family="Liberation Sans">A</text><text x="10" y="17" font-size="6" fill="#3a7fc8" font-family="Liberation Sans">A</text></svg>
<div class="a" style="left:384.50px;top:75.55px;font-size:10px;line-height:10px;color:#4d4d4d;font-weight:normal;font-family:'Liberation Sans';transform:scaleX(0.931);transform-origin:0 0;">Reflow</div>
<svg class="a" style="left:419px;top:45px" width="15" height="15" viewBox="0 0 15 15"><circle cx="6" cy="6" r="5" fill="#fff" stroke="#3a8f7c" stroke-width="1.3"/><path d="M3.5,6 L8.5,6" stroke="#3a8f7c" stroke-width="1.3"/><path d="M9.5,9.5 L14,14" stroke="#555" stroke-width="2"/></svg>
<div class="a" style="left:439px;top:43px;width:64px;height:18px;background:#fff;border:1px solid #c3c3c3"></div>
<div class="a" style="left:442.00px;top:47.60px;font-size:10px;line-height:10px;color:#333;font-weight:normal;font-family:'Liberation Sans';transform:scaleX(1.016);transform-origin:0 0;">840%</div>
<svg class="a" style="left:495px;top:50px" width="6" height="4" viewBox="0 0 6 4"><path d="M0,0 L5,0 L2.5,3Z" fill="#333"/></svg>
<svg class="a" style="left:505px;top:45px" width="15" height="15" viewBox="0 0 15 15"><circle cx="6" cy="6" r="5" fill="#fff" stroke="#3a8f7c" stroke-width="1.3"/><path d="M3.5,6 L8.5,6 M6,3.5 L6,8.5" stroke="#3a8f7c" stroke-width="1.3"/><path d="M9.5,9.5 L14,14" stroke="#555" stroke-width="2"/></svg>
<svg class="a" style="left:418px;top:62px" width="15" height="14" viewBox="0 0 15 14"><rect x="4.5" y="1.5" width="9" height="11" fill="#fff" stroke="#888"/><rect x="0.5" y="5.5" width="8" height="8" fill="#e8f0e8" stroke="#888"/><path d="M3,4 Q4,0 9,1.5" fill="none" stroke="#3a9a5c" stroke-width="1.5"/></svg>
<div class="a" style="left:435.00px;top:64.80px;font-size:10px;line-height:10px;color:#4d4d4d;font-weight:normal;font-family:'Liberation Sans';transform:scaleX(0.957);transform-origin:0 0;">Obróć w lewo</div>
<svg class="a" style="left:418px;top:79px" width="15" height="14" viewBox="0 0 15 14"><rect x="0.5" y="1.5" width="9" height="11" fill="#fff" stroke="#888"/><rect x="5.5" y="5.5" width="8" height="8" fill="#e8f0e8" stroke="#888"/><path d="M11,4 Q10,0 5,1.5" fill="none" stroke="#3a9a5c" stroke-width="1.5"/></svg>
<div class="a" style="left:435.00px;top:81.80px;font-size:10px;line-height:10px;color:#4d4d4d;font-weight:normal;font-family:'Liberation Sans';transform:scaleX(0.967);transform-origin:0 0;">Obróć w prawo</div>
<svg class="a" style="left:543px;top:47px" width="27" height="23" viewBox="0 0 27 23"><path d="M1,2 L13,2 M7,2 L7,21" stroke="#555" stroke-width="1.8"/><path d="M17,1.5 L25,1.5 M21,1.5 L21,21 M17,21 L25,21" stroke="#3a7fc8" stroke-width="1.8"/></svg>
<div class="a" style="left:536.25px;top:75.55px;font-size:10px;line-height:10px;color:#4d4d4d;font-weight:normal;font-family:'Liberation Sans';transform:scaleX(0.968);transform-origin:0 0;">Maszyna</div>
<div class="a" style="left:534.50px;top:89.00px;font-size:10px;line-height:10px;color:#4d4d4d;font-weight:normal;font-family:'Liberation Sans';transform:scaleX(0.931);transform-origin:0 0;">do pisania</div>
<svg class="a" style="left:598px;top:46px" width="28" height="26" viewBox="0 0 28 26"><rect x="0" y="0" width="27.5" height="25.5" fill="#f0c98a"/><path d="M6,4.5 L21,4.5 M13.5,4.5 L13.5,21" stroke="#555" stroke-width="1.8"/></svg>
<div class="a" style="left:583.70px;top:75.50px;font-size:10px;line-height:10px;color:#4d4d4d;font-weight:normal;font-family:'Liberation Sans';transform:scaleX(0.908);transform-origin:0 0;">Podświetlenie</div>
<svg class="a" style="left:655px;top:46px" width="24" height="26" viewBox="0 0 24 26"><path d="M4.5,1.5 L16,1.5 L22.5,8 L22.5,24.5 L4.5,24.5Z" fill="#fff" stroke="#777" stroke-width="1"/><path d="M16,1.5 L16,8 L22.5,8" fill="#e8e8e8" stroke="#777"/><rect x="1.2" y="6" width="11" height="3.6" fill="#8a4cb0"/></svg>
<div class="a" style="left:653.75px;top:75.55px;font-size:10px;line-height:10px;color:#333;font-weight:normal;font-family:'Liberation Sans';transform:scaleX(0.891);transform-origin:0 0;">Z pliku</div>
<svg class="a" style="left:686px;top:46px" width="15" height="15" viewBox="0 0 15 15"><rect x="0.5" y="0.5" width="8" height="7" fill="#fff" stroke="#a070c0" stroke-width="1"/><rect x="2" y="3" width="5" height="2" fill="#a070c0"/><path d="M5.5,4.5 L10.5,4.5 L13.5,7.5 L13.5,14.5 L5.5,14.5Z" fill="#fff" stroke="#888" stroke-width="1"/></svg>
<div class="a" style="left:702.00px;top:47.60px;font-size:10px;line-height:10px;color:#4d4d4d;font-weight:normal;font-family:'Liberation Sans';transform:scaleX(0.959);transform-origin:0 0;">Ze skanera</div>
<svg class="a" style="left:686px;top:62px" width="15" height="15" viewBox="0 0 15 15"><path d="M4,0 L4,7 M0.5,3.5 L7.5,3.5 M1.5,1 L6.5,6 M6.5,1 L1.5,6" stroke="#e04a2a" stroke-width="1.1"/><path d="M5.5,4.5 L10.5,4.5 L13.5,7.5 L13.5,14.5 L5.5,14.5Z" fill="#fff" stroke="#888" stroke-width="1"/></svg>
<div class="a" style="left:702.00px;top:64.80px;font-size:10px;line-height:10px;color:#4d4d4d;font-weight:normal;font-family:'Liberation Sans';transform:scaleX(0.950);transform-origin:0 0;">Pusty</div>
<svg class="a" style="left:686px;top:79px" width="15" height="15" viewBox="0 0 15 15"><rect x="0.5" y="2" width="7" height="10" fill="#e9c07a"/><path d="M5.5,4.5 L10.5,4.5 L13.5,7.5 L13.5,14.5 L5.5,14.5Z" fill="#fff" stroke="#888" stroke-width="1"/></svg>
<div class="a" style="left:702.00px;top:81.80px;font-size:10px;line-height:10px;color:#4d4d4d;font-weight:normal;font-family:'Liberation Sans';transform:scaleX(0.940);transform-origin:0 0;">Ze Schowka</div>
<svg class="a" style="left:782px;top:44px" width="28" height="30" viewBox="0 0 28 30"><path d="M21,1.5 L26,6.5 L9.5,22.5 L3,25.5 L5.5,19Z" fill="#3a78c5"/><path d="M16.5,8 L20.5,12" stroke="#fbfbfb" stroke-width="1.3"/><path d="M4.5,26.5 C10,27 19.5,27 20.5,24 C21.5,21 13,22 14,19 C15,16.5 22,15.5 26,15.5" fill="none" stroke="#3a78c5" stroke-width="1.4"/></svg>
<div class="a" style="left:766.25px;top:75.55px;font-size:10px;line-height:10px;color:#4d4d4d;font-weight:normal;font-family:'Liberation Sans';transform:scaleX(0.932);transform-origin:0 0;">Podpisywanie</div>
<div class="a" style="left:786.25px;top:89.00px;font-size:10px;line-height:10px;color:#4d4d4d;font-weight:normal;font-family:'Liberation Sans';transform:scaleX(0.875);transform-origin:0 0;">PDF</div>
<svg class="a" style="left:836px;top:45px" width="15" height="15" viewBox="0 0 15 15"><circle cx="7" cy="7" r="6.2" fill="#dbe8f6" stroke="#3a7fc8" stroke-width="1.2"/><path d="M1,7 L13,7 M7,1 Q3,7 7,13 M7,1 Q11,7 7,13" fill="none" stroke="#3a7fc8" stroke-width="1"/><rect x="8" y="9" width="6" height="5" fill="#3a7fc8"/></svg>
<div class="a" style="left:852.50px;top:47.60px;font-size:10px;line-height:10px;color:#4d4d4d;font-weight:normal;font-family:'Liberation Sans';transform:scaleX(0.891);transform-origin:0 0;">Powiąż</div>
<svg class="a" style="left:837px;top:61px" width="13" height="15" viewBox="0 0 13 15"><path d="M1.5,0.5 L8.5,0.5 L11.5,3.5 L11.5,14 L1.5,14Z" fill="#fff" stroke="#888"/><path d="M0,0 L4,0 L4,7 L2,5.5 L0,7Z" fill="#8a4cb0"/></svg>
<div class="a" style="left:852.50px;top:64.80px;font-size:10px;line-height:10px;color:#4d4d4d;font-weight:normal;font-family:'Liberation Sans';transform:scaleX(0.954);transform-origin:0 0;">Zakładka</div>
<svg class="a" style="left:906px;top:45px" width="13" height="15" viewBox="0 0 13 15"><path d="M1.5,2.5 L8.5,2.5 L11.5,5.5 L11.5,14 L1.5,14Z" fill="#fff" stroke="#888"/><path d="M5,9 L5,2.5 Q5,0.5 7,0.5 Q9,0.5 9,2.5 L9,10 Q9,12 7,12 Q5,12 5,10" fill="none" stroke="#3a7fc8" stroke-width="1.1"/></svg>
<div class="a" style="left:920.00px;top:47.60px;font-size:10px;line-height:10px;color:#4d4d4d;font-weight:normal;font-family:'Liberation Sans';transform:scaleX(0.934);transform-origin:0 0;">Plik załącznika</div>
<svg class="a" style="left:905px;top:62px" width="14" height="14" viewBox="0 0 14 14"><rect x="0.5" y="0.5" width="12" height="12" fill="#fff" stroke="#888"/><path d="M2,10 L5,6 L7,8 L10,4 L11,10Z" fill="#6aa87a"/><circle cx="8" cy="8" r="3" fill="none" stroke="#777"/></svg>
<div class="a" style="left:920.00px;top:64.80px;font-size:10px;line-height:10px;color:#4d4d4d;font-weight:normal;font-family:'Liberation Sans';transform:scaleX(0.982);transform-origin:0 0;">Adnotacja graficzna</div>
<svg class="a" style="left:905px;top:80px" width="14" height="12" viewBox="0 0 14 12"><rect x="0.5" y="0.5" width="13" height="10" fill="#fff" stroke="#3a6fb8" stroke-width="1.5"/><rect x="2" y="2" width="10" height="2" fill="#3a6fb8"/></svg>
<div class="a" style="left:920.00px;top:81.80px;font-size:10px;line-height:10px;color:#4d4d4d;font-weight:normal;font-family:'Liberation Sans';transform:scaleX(0.945);transform-origin:0 0;">Audio i wideo</div>
<svg class="a" style="left:1265px;top:104px" width="10" height="7" viewBox="0 0 10 7"><path d="M1,6 L4.5,2 L8,6" fill="none" stroke="#888" stroke-width="1.3"/></svg>
<svg class="a" style="left:0px;top:117px" width="1146" height="26" viewBox="0 0 1146 26"><path d="M27,25.5 L36,4.5 Q37,3.5 39,3.5 L148,3.5 Q151,3.5 152,5 L158,25.5" fill="#e9e9e9" stroke="#cfcfcf" stroke-width="1"/><path d="M151,25.5 L159,5 Q160,4.5 162,4.5 L300,4.5 Q303,4.5 304,6 L312,25.5" fill="#f7f7f7" stroke="#cfcfcf" stroke-width="1"/><path d="M0,25.5 L151,25.5 M312,25.5 L1146,25.5" stroke="#c8c8c8" stroke-width="1"/><path d="M1135,11.5 L1142,11.5 L1138.5,16Z" fill="#333"/></svg>
<div class="a" style="left:39.70px;top:127.88px;font-size:11px;line-height:11px;color:#4d4d4d;font-weight:normal;font-family:'Liberation Sans';transform:scaleX(0.913);transform-origin:0 0;">Start</div>
<div class="a" style="left:165.25px;top:127.88px;font-size:11px;line-height:11px;color:#4d4d4d;font-weight:normal;font-family:'Liberation Sans';transform:scaleX(0.899);transform-origin:0 0;">jvc_rv-b550bu_sm_supp...</div>
<svg class="a" style="left:293px;top:128.5px" width="10" height="10" viewBox="0 0 10 10"><path d="M1.5,1.5 L8.5,8.5 M8.5,1.5 L1.5,8.5" stroke="#333" stroke-width="1.6"/></svg>
<div class="a" style="left:1146px;top:117px;width:134px;height:25px;background:linear-gradient(90deg,#1a1a1a,#2a2a2a 50%,#141414);"></div>
<div class="a" style="left:1152.00px;top:119.61px;font-size:9.5px;line-height:9.5px;color:#e6e6e6;font-weight:bold;font-family:'Liberation Sans';transform:scaleX(1.114);transform-origin:0 0;">Convert</div>
<div class="a" style="left:1152.00px;top:131.01px;font-size:9.5px;line-height:9.5px;color:#e6e6e6;font-weight:bold;font-family:'Liberation Sans';transform:scaleX(1.122);transform-origin:0 0;">PDF 2 Word</div>
<div class="a" style="left:1230px;top:118px;width:24px;height:11px;background:#e5392d;border-radius:2px"></div>
<div class="a" style="left:1233.00px;top:119.10px;font-size:10px;line-height:10px;color:#fff;font-weight:normal;font-family:'Liberation Sans';transform:scaleX(0.900);transform-origin:0 0;">PDF</div>
<div class="a" style="left:1248px;top:130px;width:30px;height:11px;background:#1c9be6;border-radius:2px"></div>
<div class="a" style="left:1250.50px;top:130.60px;font-size:10px;line-height:10px;color:#fff;font-weight:normal;font-family:'Liberation Sans';transform:scaleX(1.034);transform-origin:0 0;">Word</div>
<svg class="a" style="left:1236px;top:130px" width="10" height="9" viewBox="0 0 10 9"><path d="M1,0 L1,4 Q1,6 4,6 L6,6" fill="none" stroke="#fff" stroke-width="1.8"/><path d="M5.5,3 L9,6 L5.5,8.5Z" fill="#fff"/></svg>
<svg class="a" style="left:18px;top:149px" width="7" height="9" viewBox="0 0 7 9"><path d="M0.5,0.5 L5.5,4.5 L0.5,8.5Z" fill="#222"/></svg>
<svg class="a" style="left:7px;top:184px" width="16" height="19" viewBox="0 0 16 19"><path d="M1.5,1.5 L10,1.5 L14.5,6 L14.5,17.5 L1.5,17.5Z" fill="#fff" stroke="#888"/><path d="M1,0.5 L4.5,0.5 L4.5,9 L2.8,7.5 L1,9Z" fill="#7d55b5"/></svg>
<svg class="a" style="left:6px;top:221px" width="17" height="20" viewBox="0 0 17 20"><rect x="0.5" y="0.5" width="10" height="13" fill="#3a78c5" stroke="#fff" stroke-width="0.8"/><rect x="2.5" y="2.5" width="10" height="13" fill="#3a78c5" stroke="#fff" stroke-width="0.8"/><rect x="5" y="5" width="11" height="14" fill="#3a78c5" stroke="#fff" stroke-width="0.8"/></svg>
<svg class="a" style="left:4px;top:259px" width="21" height="20" viewBox="0 0 21 20"><path d="M6,1 L20,1 L15,7 L1,7Z" fill="#fff" stroke="#3a78c5" stroke-width="1.2"/><path d="M6,7 L20,7 L15,13 L1,13Z" fill="#3a78c5"/><path d="M6,12 L20,12 L15,18.5 L1,18.5Z" fill="#fff" stroke="#3a78c5" stroke-width="1.2"/><path d="M6,7 L20,7 L15,13 L1,13Z" fill="#3a78c5"/></svg>
<svg class="a" style="left:5px;top:296px" width="20" height="20" viewBox="0 0 20 20"><rect x="0.5" y="0.5" width="12" height="9" fill="#f2c15e"/><path d="M3,3 L10,3 M3,6 L10,6" stroke="#fff" stroke-width="1"/><path d="M7.5,7.5 L19,7.5 L19,15 L17,15 L17,18 L14,15 L7.5,15Z" fill="#7b7b7b"/><path d="M10,10.5 L17,10.5 M10,12.5 L17,12.5" stroke="#ddd" stroke-width="0.8"/></svg>
<svg class="a" style="left:6px;top:334px" width="17" height="17" viewBox="0 0 17 17"><path d="M5,12 L12.5,4.5 Q14.5,2.5 15.5,4.5 Q16,6 14.5,7.5 L6.5,15.5 Q3.5,17 2,15 Q0.5,13 3,10.5 L10,3.5 Q12,1.5 13.5,1.5" fill="none" stroke="#3a78c5" stroke-width="1.6"/></svg>
<svg class="a" style="left:7px;top:371px" width="16" height="20" viewBox="0 0 16 20"><path d="M3.5,9 L3.5,5.5 A4.5,4.5 0 0 1 12.5,5.5 L12.5,9" fill="none" stroke="#ecb24e" stroke-width="2.4"/><rect x="0.5" y="8.5" width="15" height="11" fill="#ecb24e"/><rect x="7" y="12" width="2" height="5" fill="#fff"/></svg>
<svg class="a" style="left:6px;top:408px" width="18" height="20" viewBox="0 0 18 20"><path d="M10,1 L13,4 L5,12 L1.5,13.5 L3,10Z" fill="#3a78c5"/><path d="M2,13 L0.5,16" stroke="#3a78c5" stroke-width="1.3"/><circle cx="12.5" cy="13" r="3.2" fill="#f3d8e8" stroke="#9b5aa8" stroke-width="1.3"/><path d="M10.5,15.5 L9.5,19.5 L12.5,18 L15.5,19.5 L14.5,15.5" fill="none" stroke="#9b5aa8" stroke-width="1.2"/></svg>
<svg class="a" style="left:30px;top:360px" width="5" height="33" viewBox="0 0 5 33"><g fill="#8a8a8a"><rect x="2" y="0" width="1" height="1"/><rect x="2" y="3" width="1" height="1"/><rect x="2" y="6" width="1" height="1"/><rect x="2" y="9" width="1" height="1"/><rect x="2" y="12" width="1" height="1"/><rect x="2" y="15" width="1" height="1"/><rect x="2" y="18" width="1" height="1"/><rect x="2" y="21" width="1" height="1"/><rect x="2" y="24" width="1" height="1"/><rect x="2" y="27" width="1" height="1"/><rect x="2" y="30" width="1" height="1"/></g></svg>
<div class="a" style="left:1269px;top:143px;width:11px;height:6px;background:#e6e6e6;border:1px solid #cfcfcf;border-radius:1px"></div>
<svg class="a" style="left:1270px;top:152px" width="9" height="7" viewBox="0 0 9 7"><path d="M1,5.5 L4.5,2 L8,5.5" fill="none" stroke="#555" stroke-width="1.2"/></svg>
<div class="a" style="left:1270px;top:454px;width:9px;height:14px;background:#cdcdcd;"></div>
<div class="a" style="left:35px;top:653px;width:6.5px;height:11.5px;background:#e2e2e2;border:1px solid #9a9a9a;border-radius:1px"></div>
<svg class="a" style="left:45px;top:655px" width="6" height="8" viewBox="0 0 6 8"><path d="M4.5,1.5 L1.5,4 L4.5,6.5" fill="none" stroke="#444" stroke-width="1.3"/></svg>
<div class="a" style="left:188px;top:654px;width:332px;height:10px;background:#cdcdcd;"></div>
<svg class="a" style="left:1259px;top:655px" width="7" height="8" viewBox="0 0 7 8"><path d="M1.5,1.5 L4.5,4 L1.5,6.5" fill="none" stroke="#444" stroke-width="1.3"/></svg>
<svg class="a" style="left:1271px;top:655px" width="7" height="6" viewBox="0 0 7 6"><path d="M1,1.2 L3.5,4.2 L6,1.2" fill="none" stroke="#444" stroke-width="1.3"/></svg>
<svg class="a" style="left:516px;top:669px" width="13" height="13" viewBox="0 0 13 13"><path d="M1.2,6.5 L7,1 L7,12Z" fill="#1a1a1a"/><path d="M8.8,6.5 L11.2,1 L11.2,12Z" fill="#1a1a1a"/></svg>
<svg class="a" style="left:539px;top:669px" width="8" height="13" viewBox="0 0 8 13"><path d="M0.7,6.5 L6.4,1 L6.4,12Z" fill="#1a1a1a"/></svg>
<div class="a" style="left:554px;top:667px;width:95px;height:17px;background:#fff;border:1px solid #bdbdbd"></div>
<div class="a" style="left:557.80px;top:670.59px;font-size:10.5px;line-height:10.5px;color:#4d4d4d;font-weight:normal;font-family:'Liberation Sans';">58 / 93</div>
<svg class="a" style="left:641px;top:674px" width="6" height="4" viewBox="0 0 6 4"><path d="M0,0 L5,0 L2.5,3Z" fill="#333"/></svg>
<svg class="a" style="left:656px;top:669px" width="8" height="13" viewBox="0 0 8 13"><path d="M0.7,1 L6.7,6.5 L0.7,12Z" fill="#1a1a1a"/></svg>
<svg class="a" style="left:675px;top:669px" width="12" height="13" viewBox="0 0 12 13"><path d="M0.7,1 L3.5,6.5 L0.7,12Z" fill="#1a1a1a"/><path d="M5,1 L10.6,6.5 L5,12Z" fill="#1a1a1a"/></svg>
<svg class="a" style="left:695px;top:667px" width="15" height="16" viewBox="0 0 15 16"><rect x="0.5" y="0.5" width="9" height="9" fill="#fff" stroke="#3a78c5"/><rect x="0.5" y="0.5" width="9" height="2.5" fill="#3a78c5"/><rect x="4.5" y="6.5" width="10" height="9" fill="#fff" stroke="#777"/><path d="M4.5,10.5 L14.5,10.5 M9.5,6.5 L9.5,15.5" stroke="#777"/><path d="M9,1 L9,6 M6.5,3.5 L11.5,3.5" stroke="#2a9a4a" stroke-width="1.6"/></svg>
<svg class="a" style="left:716px;top:667px" width="15" height="16" viewBox="0 0 15 16"><rect x="0.5" y="0.5" width="9" height="9" fill="#fff" stroke="#b9c9dc"/><rect x="4.5" y="6.5" width="10" height="9" fill="#fff" stroke="#c8c8c8"/><path d="M4.5,10.5 L14.5,10.5 M9.5,6.5 L9.5,15.5" stroke="#c8c8c8"/></svg>
<svg class="a" style="left:999px;top:669px" width="12" height="14" viewBox="0 0 12 14"><rect x="1.5" y="1.5" width="9" height="11.5" fill="#fff" stroke="#8a8a8a" stroke-width="1.2"/><path d="M3,4.5 L9,4.5 M3,7 L9,7 M3,9.5 L9,9.5" stroke="#bbb" stroke-width="0.8"/></svg>
<div class="a" style="left:1016.2px;top:668px;width:20.3px;height:15.3px;background:#c9dcf2;"></div>
<svg class="a" style="left:1019px;top:668px" width="14" height="16" viewBox="0 0 14 16"><rect x="2.5" y="1.5" width="9" height="8" fill="#fff" stroke="#7a7a7a" stroke-width="1.2"/><path d="M2.5,11 L11.5,11 L11.5,15.5 M2.5,11 L2.5,15.5" fill="none" stroke="#7a7a7a" stroke-width="1.2"/><path d="M4.5,4.5 L9.5,4.5 M4.5,6.5 L9.5,6.5 M4.5,13.5 L9.5,13.5" stroke="#aaa" stroke-width="0.8"/></svg>
<svg class="a" style="left:1040px;top:669px" width="14" height="14" viewBox="0 0 14 14"><rect x="1" y="2.5" width="5.5" height="9.5" fill="#fff" stroke="#8a8a8a" stroke-width="1.2"/><rect x="7" y="2.5" width="5.5" height="9.5" fill="#fff" stroke="#8a8a8a" stroke-width="1.2"/></svg>
<svg class="a" style="left:1061px;top:668px" width="15" height="16" viewBox="0 0 15 16"><path d="M1,1.5 L6,1.5 L6,15 M14,1.5 L9,1.5 L9,15 M1,10 L6,10 M9,10 L14,10" fill="none" stroke="#8a8a8a" stroke-width="1.3"/><path d="M1,4.5 L5,4.5 M1,6.5 L5,6.5 M10,4.5 L14,4.5 M10,6.5 L14,6.5 M1,13 L5,13 M10,13 L14,13" stroke="#bbb" stroke-width="0.8"/></svg>
<div class="a" style="left:1098.00px;top:670.69px;font-size:10.5px;line-height:10.5px;color:#4d4d4d;font-weight:normal;font-family:'Liberation Sans';">840%</div>
<svg class="a" style="left:1144px;top:673px" width="6" height="4" viewBox="0 0 6 4"><path d="M0,0 L5,0 L2.5,3Z" fill="#333"/></svg>
<svg class="a" style="left:1151px;top:668px" width="14" height="14" viewBox="0 0 14 14"><circle cx="7" cy="7" r="6" fill="none" stroke="#444" stroke-width="1.1"/><path d="M3.5,7 L10.5,7" stroke="#444" stroke-width="1.1"/></svg>
<div class="a" style="left:1171px;top:674.5px;width:77px;height:1px;background:#9a9a9a;"></div>
<div class="a" style="left:1209px;top:672px;width:1px;height:5px;background:#9a9a9a;"></div>
<div class="a" style="left:1227px;top:671px;width:3.5px;height:8px;background:#333;"></div>
<svg class="a" style="left:1250px;top:668px" width="14" height="14" viewBox="0 0 14 14"><circle cx="7" cy="7" r="6" fill="none" stroke="#444" stroke-width="1.1"/><path d="M3.5,7 L10.5,7 M7,3.5 L7,10.5" stroke="#444" stroke-width="1.1"/></svg>
<svg class="a" style="left:13px;top:696px" width="15" height="15" viewBox="0 0 15 15"><path d="M0,2 L6.5,1 L6.5,7 L0,7Z M7.5,0.9 L15,0 L15,7 L7.5,7Z M0,8 L6.5,8 L6.5,14 L0,13Z M7.5,8 L15,8 L15,15 L7.5,14.1Z" fill="#fff"/></svg>
<svg class="a" style="left:52px;top:695px" width="17" height="17" viewBox="0 0 17 17"><circle cx="10.5" cy="6.5" r="5.2" fill="none" stroke="#fff" stroke-width="1.3"/><path d="M6.8,10.2 L1,16" stroke="#fff" stroke-width="1.5"/></svg>
<svg class="a" style="left:92px;top:695px" width="16" height="17" viewBox="0 0 16 17"><rect x="1.5" y="4.5" width="9" height="8" fill="none" stroke="#fff" stroke-width="1.2"/><path d="M0,1.5 L12,1.5 M0,15.5 L12,15.5 M14.5,0 L14.5,17" stroke="#fff" stroke-width="1.2"/></svg>
<div class="a" style="left:126px;top:718px;width:34px;height:2px;background:#76b9ed;"></div>
<svg class="a" style="left:133px;top:694px" width="20" height="18" viewBox="0 0 20 18"><path d="M0,2 L7,2 L9,4 L19,4 L19,17 L0,17Z" fill="#f5c342"/><rect x="0" y="6" width="19" height="11" fill="#f8d775"/><path d="M5,10 L14,10 L14,15 L12,15 L12,12 L7,12 L7,15 L5,15Z" fill="#3a9ad9"/></svg>
<svg class="a" style="left:174px;top:694px" width="20" height="19" viewBox="0 0 20 19"><ellipse cx="10" cy="9.5" rx="9.5" ry="9.5" fill="#e0242f"/><ellipse cx="10" cy="9.5" rx="4" ry="6.8" fill="#2e2f32"/></svg>
<svg class="a" style="left:215px;top:693px" width="20" height="19" viewBox="0 0 20 19"><rect x="0" y="0" width="20" height="19" fill="#0b1f3a"/><rect x="1" y="1" width="18" height="17" fill="#2e8fd8"/><text x="2.5" y="14" font-size="11" font-weight="bold" fill="#0b1f3a" font-family="Liberation Sans">Ps</text></svg>
<div class="a" style="left:250px;top:718px;width:27px;height:2px;background:#76b9ed;"></div>
<svg class="a" style="left:256px;top:693px" width="20" height="20" viewBox="0 0 20 20"><circle cx="10" cy="10" r="9.5" fill="#dd4b3e"/><path d="M10,10 L1.8,5.2 A9.5,9.5 0 0 0 10,19.5Z" fill="#1ea362"/><path d="M10,10 L10,19.5 A9.5,9.5 0 0 0 18.2,5.2Z" fill="#ffcd40"/><circle cx="10" cy="10" r="4.6" fill="#fff"/><circle cx="10" cy="10" r="3.6" fill="#4a8af4"/></svg>
<div class="a" style="left:287.5px;top:687px;width:41.5px;height:33px;background:#505255;"></div>
<div class="a" style="left:287.5px;top:717.8px;width:41.5px;height:2.2px;background:#7ab8ea;"></div>
<svg class="a" style="left:297px;top:692px" width="22" height="22" viewBox="0 0 22 22"><path d="M0,0.5 L16.5,0.5 L21,5 L21,21 L0,21Z" fill="#ef8a26"/><path d="M16.5,0.5 L16.5,5 L21,5Z" fill="#f6c591"/><path d="M14.5,6.5 A5.5,5.5 0 1 0 15.5,12 L10.5,12" fill="none" stroke="#fff8ec" stroke-width="3.2"/><rect x="6.5" y="17" width="8" height="2.2" fill="#fde3c4"/></svg>
<svg class="a" style="left:1131px;top:695px" width="16" height="16" viewBox="0 0 16 16"><circle cx="4.5" cy="8" r="2.6" fill="none" stroke="#fff" stroke-width="1.2"/><path d="M0.5,15 Q4.5,9 8.5,15" fill="none" stroke="#fff" stroke-width="1.2"/><circle cx="11" cy="4" r="2.6" fill="none" stroke="#fff" stroke-width="1.2"/><path d="M7.5,10 Q11,5 15,10" fill="none" stroke="#fff" stroke-width="1.2"/></svg>
<svg class="a" style="left:1162px;top:699px" width="13" height="9" viewBox="0 0 13 9"><path d="M1,7.5 L6.5,1.5 L12,7.5" fill="none" stroke="#fff" stroke-width="1.2"/></svg>
<div class="a" style="left:1194.80px;top:690.98px;font-size:11px;line-height:11px;color:#fff;font-weight:normal;font-family:'Liberation Sans';transform:scaleX(0.842);transform-origin:0 0;">00:03</div>
<div class="a" style="left:1183.00px;top:706.38px;font-size:11px;line-height:11px;color:#fff;font-weight:normal;font-family:'Liberation Sans';transform:scaleX(0.872);transform-origin:0 0;">01.10.2018</div>
<svg class="a" style="left:1244px;top:695px" width="23" height="21" viewBox="0 0 23 21"><path d="M1.5,1.5 L16.5,1.5 L16.5,12 L6,12 L3,15 L3,12 L1.5,12Z" fill="#fff"/><path d="M4,4.5 L14,4.5 M4,7 L14,7 M4,9.5 L10,9.5" stroke="#2e2f32" stroke-width="1"/><circle cx="15" cy="14" r="6.2" fill="#2e2f32" stroke="#fff" stroke-width="1"/><text x="12" y="18" font-size="9.5" fill="#fff" font-family="Liberation Sans">3</text></svg>
</body></html>
